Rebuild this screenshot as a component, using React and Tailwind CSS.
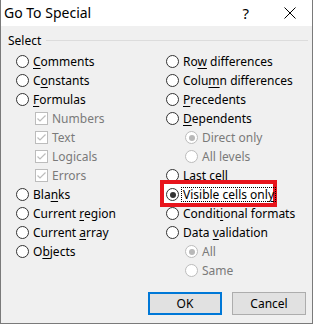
import React from "react";

const F = { fontFamily: '"Noto Sans", "Open Sans", sans-serif' };

function U({ t, u }) {
  if (u == null) return <span>{t}</span>;
  return (
    <span>
      {t.slice(0, u)}
      <span className="underline underline-offset-[2px]">{t[u]}</span>
      {t.slice(u + 1)}
    </span>
  );
}

function Radio({ checked, disabled }) {
  return (
    <span
      className={
        "flex h-[13px] w-[13px] shrink-0 items-center justify-center rounded-full border bg-white " +
        (disabled ? "border-[#bcbcbc]" : "border-[#333333]")
      }
    >
      {checked && (
        <span
          className={
            "h-[6px] w-[6px] rounded-full " + (disabled ? "bg-[#b8b8b8]" : "bg-[#333333]")
          }
        />
      )}
    </span>
  );
}

function Check() {
  return (
    <span className="flex h-[13px] w-[13px] shrink-0 items-center justify-center border border-[#bcbcbc] bg-white">
      <svg width="11" height="11" viewBox="0 0 11 11">
        <path d="M1.5 5.5 L4 8 L9.5 2.5" fill="none" stroke="#bcbcbc" strokeWidth="1.2" />
      </svg>
    </span>
  );
}

function RRow({ t, u, indent, disabled, checked, box }) {
  return (
    <div className={"relative flex h-[19px] items-center " + (indent ? "pl-[19px]" : "")}>
      {box ? <Check /> : <Radio checked={checked} disabled={disabled} />}
      <span
        className={
          "ml-[4px] text-[12px] leading-[15px] " + (disabled ? "text-[#7a7a7a]" : "text-black")
        }
      >
        <U t={t} u={u} />
      </span>
    </div>
  );
}

export default function App() {
  return (
    <div className="h-[326px] w-[316px] overflow-hidden bg-white" style={F}>
      <div className="flex h-[324px] w-[313px] flex-col border-x border-b border-[#7a7a7a] bg-[#f0f0f0]">
        <div className="flex h-[26px] shrink-0 items-center bg-white">
          <span className="pl-[3px] text-[14px] leading-[20px] text-black">Go To Special</span>
          <span className="ml-auto mr-[35px] text-[15px] leading-[20px] text-black">?</span>
          <svg width="12" height="12" viewBox="0 0 12 12" className="mr-[16px]">
            <path d="M0.5 0.5 L11.5 11.5 M11.5 0.5 L0.5 11.5" stroke="#000" strokeWidth="1" />
          </svg>
        </div>
        <div className="flex items-center pl-[7px] pr-[4px] pt-[7px]">
          <span className="text-[12px] leading-[15px] text-black">Select</span>
          <span className="ml-[5px] h-px flex-1 bg-[#dcdcdc]" />
        </div>
        <div className="flex pt-[4px]">
          <div className="w-[165px] pl-[15px]">
            <RRow t="Comments" u={0} />
            <RRow t="Constants" u={1} />
            <RRow t="Formulas" u={0} />
            <RRow t="Numbers" box indent disabled />
            <RRow t="Text" box indent disabled />
            <RRow t="Logicals" box indent disabled />
            <RRow t="Errors" box indent disabled />
            <RRow t="Blanks" u={3} />
            <RRow t="Current region" u={8} />
            <RRow t="Current array" u={8} />
            <RRow t="Objects" u={1} />
          </div>
          <div className="flex-1">
            <RRow t="Row differences" u={2} />
            <RRow t="Column differences" u={4} />
            <RRow t="Precedents" u={0} />
            <RRow t="Dependents" u={0} />
            <RRow t="Direct only" indent disabled checked />
            <RRow t="All levels" indent disabled />
            <RRow t="Last cell" u={2} />
            <div className="relative flex h-[19px] items-center">
              <div className="absolute left-[-6px] top-[-5px] h-[27px] w-[117px] border-[4px] border-[#e8141c] bg-white" />
              <span className="relative">
                <Radio checked />
              </span>
              <span className="relative ml-[2px] border border-dotted border-black px-[1px] text-[12px] leading-[13px] text-black">
                <U t="Visible cells only" u={17} />
              </span>
            </div>
            <RRow t="Conditional formats" u={6} />
            <RRow t="Data validation" u={5} />
            <RRow t="All" indent disabled checked />
            <RRow t="Same" indent disabled />
          </div>
        </div>
        <div className="mt-auto flex justify-end gap-[10px] pb-[8px] pr-[6px]">
          <button className="h-[23px] w-[74px] border-2 border-[#0078d7] bg-[#e1e1e1] text-[12px] text-black">
            OK
          </button>
          <button className="h-[23px] w-[74px] border border-[#adadad] bg-[#e1e1e1] text-[12px] text-black">
            Cancel
          </button>
        </div>
      </div>
    </div>
  );
}
